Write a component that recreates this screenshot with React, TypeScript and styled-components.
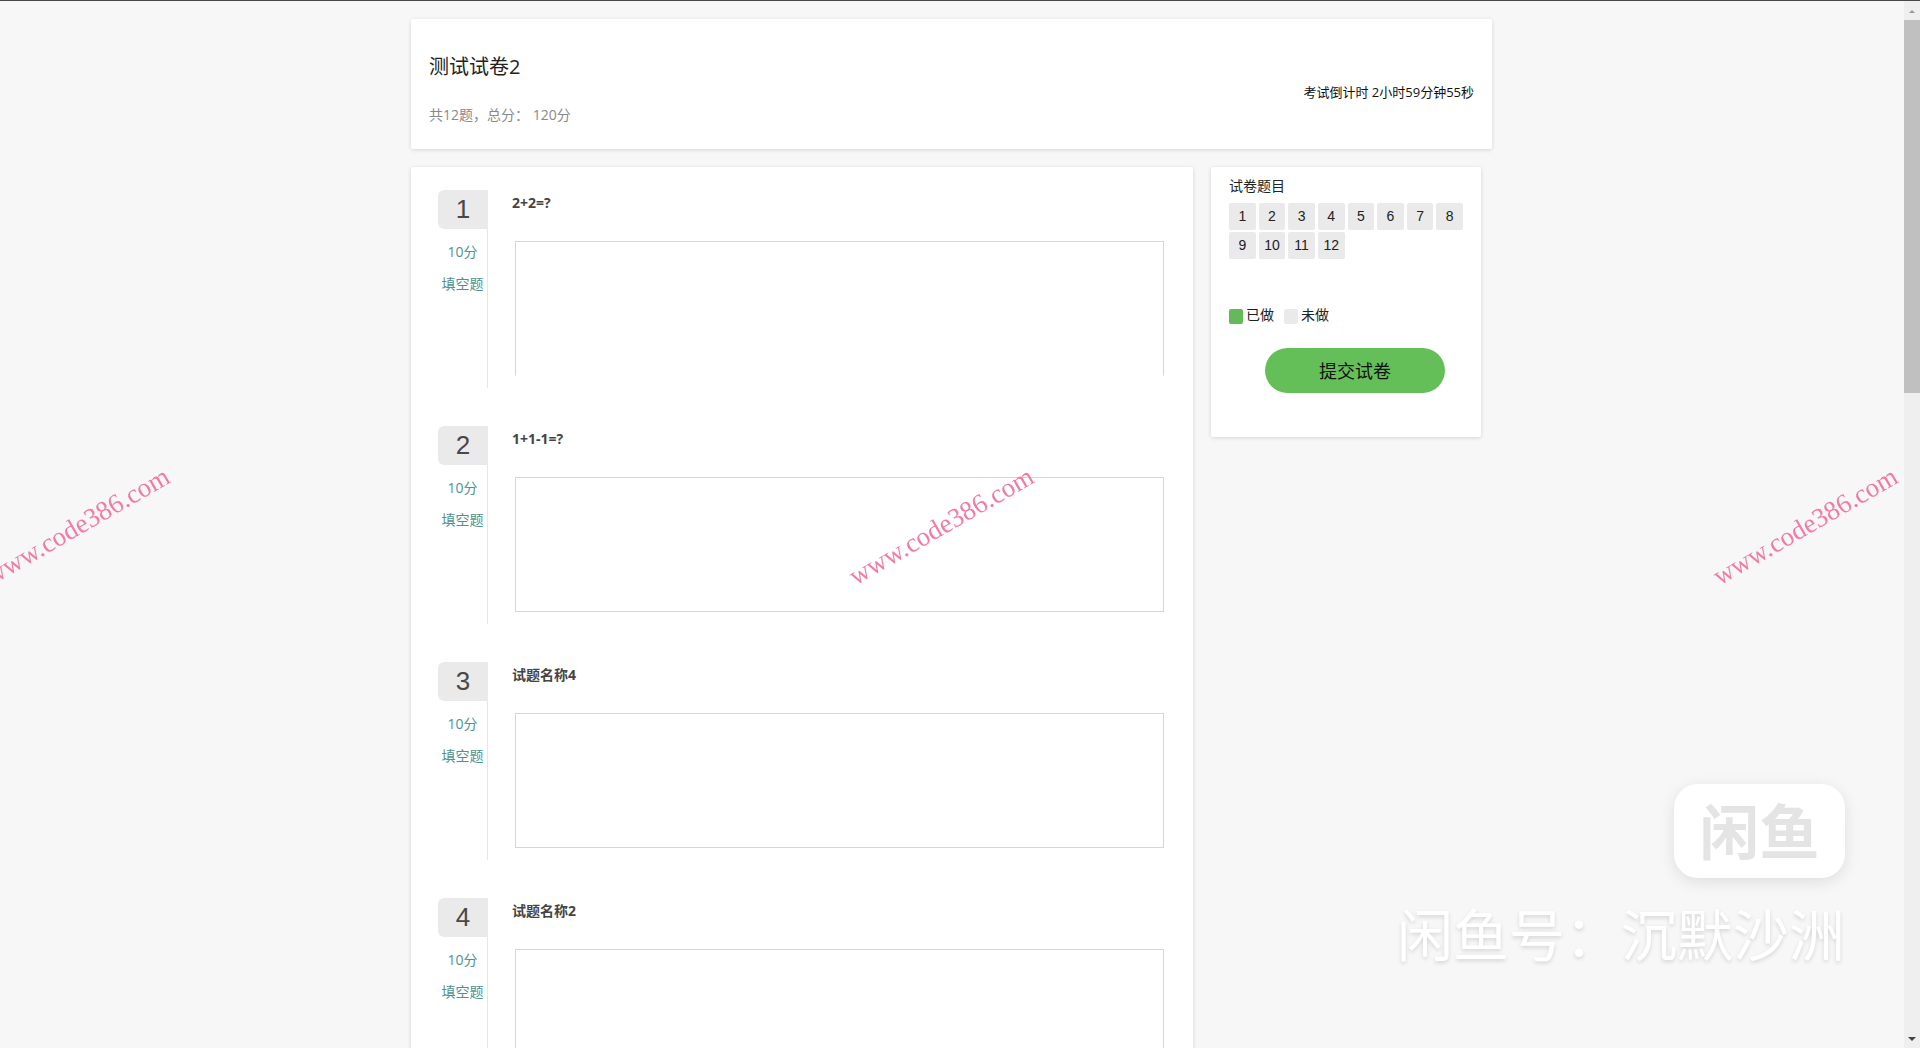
import React from "react";
import styled, { createGlobalStyle } from "styled-components";

const ui = `"Noto Sans CJK SC", "Open Sans", sans-serif`;
const arial = `"Liberation Sans", "Noto Sans CJK SC", sans-serif`;
const cardShadow = "0 1px 4px rgba(0, 0, 0, 0.14)";

const GlobalStyle = createGlobalStyle`
  *, *::before, *::after { box-sizing: border-box; }
  body { margin: 0; background: #f7f7f7; font-family: "Open Sans", ${ui}; font-size: 14px; color: #222; }
  h1, h2, p, ol { margin: 0; padding: 0; list-style: none; }
`;

const Shell = styled.div`
  display: flex;
  height: 100vh;
  overflow: hidden;
  border-top: 1px solid #4a464a;
  background: #f7f7f7;
`;

const Viewport = styled.div`
  flex: 1;
  min-width: 0;
  overflow: hidden;
  padding: 18px 19px 0 18px;
`;

const Page = styled.main`
  display: flex;
  flex-direction: column;
  gap: 18px;
  max-width: 1081px;
  margin: 0 auto;
`;

const Header = styled.header`
  display: flex;
  align-items: center;
  justify-content: space-between;
  padding: 30px 18px 22px;
  background: #fff;
  border-radius: 2px;
  box-shadow: ${cardShadow};
`;

const Heading = styled.div`
  display: flex;
  flex-direction: column;
  gap: 18px;
`;

const Title = styled.h1`
  font-size: 20px;
  font-weight: 400;
  line-height: 36px;
`;

const Summary = styled.p`
  line-height: 24px;
  color: #8a8a8a;
  white-space: pre;
`;

const Timer = styled.time`
  padding-top: 8px;
  font-size: 13px;
  line-height: 20px;
  color: #111;
`;

const Columns = styled.div`
  display: flex;
  align-items: flex-start;
  gap: 18px;
`;

const Questions = styled.ol`
  flex: 1;
  max-width: 782px;
  display: flex;
  flex-direction: column;
  gap: 38px;
  padding: 23px 29px 23px 27px;
  background: #fff;
  border-radius: 2px;
  box-shadow: ${cardShadow};
`;

const Question = styled.li`
  display: flex;
  gap: 24px;
  min-height: 198px;
`;

const Info = styled.div`
  width: 50px;
  border-right: 1px solid #e6e6e6;
  text-align: center;
  line-height: 32px;
  color: #4f9290;
`;

const Index = styled.div`
  width: 50px;
  height: 39px;
  margin-bottom: 7px;
  background: #eaeaea;
  border-radius: 6px 0 0 6px;
  font: 26px/38px ${arial};
  color: #484848;
`;

const Body = styled.div`
  flex: 1;
  display: flex;
  flex-direction: column;
  gap: 25px;
`;

const Name = styled.label`
  font-weight: 700;
  line-height: 26px;
  color: #444;
`;

const Answer = styled.textarea<{ $open?: boolean }>`
  display: block;
  height: 135px;
  margin-left: 3px;
  padding: 8px;
  border: 1px solid #d6d6d6;
  border-bottom-color: ${(p) => (p.$open ? "transparent" : "#d6d6d6")};
  background: #fff;
  font: 14px/20px ${ui};
  resize: none;
  outline: none;
`;

const Side = styled.aside`
  width: 270px;
  padding: 7px 18px 44px;
  background: #fff;
  border-radius: 2px;
  box-shadow: ${cardShadow};
`;

const SideTitle = styled.h2`
  font-size: 14px;
  font-weight: 400;
  line-height: 24px;
  margin-bottom: 5px;
`;

const Sheet = styled.div`
  display: grid;
  grid-template-columns: repeat(8, 1fr);
  gap: 2px 3px;
`;

const Cell = styled.button`
  height: 27px;
  padding: 0 0 2px;
  border: 0;
  border-radius: 2px;
  background: #eaeaea;
  font: 14px/24px ${arial};
  color: #222;
`;

const Legend = styled.div`
  display: flex;
  gap: 10px;
  margin-top: 44px;
  line-height: 24px;
`;

const LegendItem = styled.span<{ $color: string }>`
  display: flex;
  align-items: center;
  gap: 3px;

  &::before {
    content: "";
    width: 14px;
    height: 15px;
    margin-top: 3px;
    border-radius: 2px;
    background: ${(p) => p.$color};
  }
`;

const Submit = styled.button`
  display: block;
  width: 180px;
  height: 45px;
  margin: 21px 18px 0 auto;
  padding: 0;
  border: 0;
  border-radius: 23px;
  background: #64bf58;
  font: 18px/45px ${ui};
  color: #111;
`;

const Scrollbar = styled.div`
  display: flex;
  flex-direction: column;
  width: 16px;
  background: #efefef;
`;

const Arrow = styled.svg`
  display: block;
  width: 16px;
  height: 19px;
`;

const Track = styled.div`
  flex: 1;
`;

const Thumb = styled.div`
  height: 37%;
  background: #c0c0c0;
`;

const Overlay = styled.div`
  position: fixed;
  inset: 0;
  overflow: hidden;
  pointer-events: none;
`;

const Tiles = styled.div`
  display: flex;
  height: 100%;
  margin-left: -355px;
  padding-top: 4px;
`;

const Tile = styled.div`
  flex: 0 0 864px;
  display: flex;
  align-items: center;
  justify-content: center;
`;

const Site = styled.span`
  transform: rotate(-30deg);
  font: 27px/28px "Liberation Serif", serif;
  color: #f07ca6;
`;

const Seller = styled.div`
  position: absolute;
  right: 75px;
  bottom: 76px;
  display: flex;
  flex-direction: column;
  align-items: flex-end;
  gap: 14px;
`;

const Brand = styled.div`
  width: 171px;
  height: 94px;
  border-radius: 24px;
  background: #fff;
  box-shadow: 0 4px 16px rgba(0, 0, 0, 0.1);
  font: 700 60px/90px ${ui};
  text-align: center;
  color: #e4e4e4;
`;

const SellerName = styled.p`
  font: 56px/80px ${ui};
  color: #fff;
  text-shadow: 0 2px 4px rgba(0, 0, 0, 0.14);
`;

const questions = ["2+2=?", "1+1-1=?", "试题名称4", "试题名称2"];
const cells = Array.from({ length: 12 }, (_, i) => i + 1);

export default function App() {
  return (
    <>
      <GlobalStyle />
      <Shell>
        <Viewport>
          <Page>
            <Header>
              <Heading>
                <Title>测试试卷2</Title>
                <Summary>共12题，总分： 120分</Summary>
              </Heading>
              <Timer>考试倒计时 2小时59分钟55秒</Timer>
            </Header>
            <Columns>
              <Questions>
                {questions.map((name, i) => (
                  <Question key={name}>
                    <Info>
                      <Index>{i + 1}</Index>
                      <div>10分</div>
                      <div>填空题</div>
                    </Info>
                    <Body>
                      <Name htmlFor={`answer-${i}`}>{name}</Name>
                      <Answer id={`answer-${i}`} $open={i === 0} />
                    </Body>
                  </Question>
                ))}
              </Questions>
              <Side>
                <SideTitle>试卷题目</SideTitle>
                <Sheet>
                  {cells.map((n) => (
                    <Cell key={n} type="button">{n}</Cell>
                  ))}
                </Sheet>
                <Legend>
                  <LegendItem $color="#64b95a">已做</LegendItem>
                  <LegendItem $color="#eaeaea">未做</LegendItem>
                </Legend>
                <Submit type="button">提交试卷</Submit>
              </Side>
            </Columns>
          </Page>
        </Viewport>
        <Scrollbar aria-hidden="true">
          <Arrow viewBox="0 0 16 19"><path d="M5 12 L8 9 L11 12 Z" fill="#999" /></Arrow>
          <Track><Thumb /></Track>
          <Arrow viewBox="0 0 16 19"><path d="M4 8 H12 L8 12 Z" fill="#444" /></Arrow>
        </Scrollbar>
      </Shell>
      <Overlay>
        <Tiles>
          {[0, 1, 2].map((n) => (
            <Tile key={n}><Site>www.code386.com</Site></Tile>
          ))}
        </Tiles>
        <Seller>
          <Brand>闲鱼</Brand>
          <SellerName>闲鱼号：沉默沙洲</SellerName>
        </Seller>
      </Overlay>
    </>
  );
}
